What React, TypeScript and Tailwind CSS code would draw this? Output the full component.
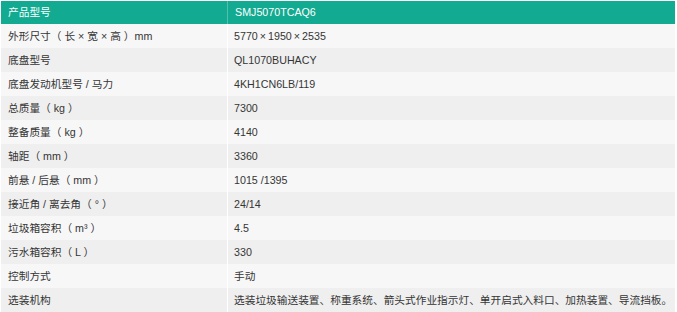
import React from 'react';

const rows: [string, React.ReactNode][] = [
  [
    '外形尺寸（ 长 × 宽 × 高 ）mm',
    <>
      5770<span className="mx-[2px]">×</span>1950<span className="mx-[2px]">×</span>2535
    </>,
  ],
  ['底盘型号', 'QL1070BUHACY'],
  ['底盘发动机型号 / 马力', '4KH1CN6LB/119'],
  ['总质量（ kg ）', '7300'],
  ['整备质量（ kg ）', '4140'],
  ['轴距（ mm ）', '3360'],
  ['前悬 / 后悬（ mm ）', '1015 /1395'],
  ['接近角 / 离去角（ ° ）', '24/14'],
  ['垃圾箱容积（ m³ ）', '4.5'],
  ['污水箱容积（ L ）', '330'],
  ['控制方式', '手动'],
  ['选装机构', '选装垃圾输送装置、称重系统、箭头式作业指示灯、单开启式入料口、加热装置、导流挡板。'],
];

const App: React.FC = () => {
  return (
    <div
      className="w-[677px] h-[312px] bg-white pt-px pl-px overflow-hidden text-[10.7px] text-[#353535]"
      style={{ fontFamily: '"Liberation Sans", "Noto Sans CJK SC", sans-serif' }}
    >
      <div className="w-[674px]">
        <div className="flex h-[23px] bg-[#12aa90] text-white">
          <div className="w-[227px] pl-[7px] flex items-center border-r border-[#4fc1ae]">产品型号</div>
          <div className="flex-1 pl-[7px] flex items-center">SMJ5070TCAQ6</div>
        </div>
        {rows.map(([label, value], i) => (
          <div key={label} className={`flex h-6 ${i % 2 === 0 ? 'bg-[#f7f7f7]' : 'bg-[#efefef]'}`}>
            <div className="w-[227px] pl-[7px] flex items-center border-r border-white">{label}</div>
            <div className="flex-1 pl-[6px] flex items-center whitespace-nowrap">{value}</div>
          </div>
        ))}
      </div>
    </div>
  );
};

export default App;
